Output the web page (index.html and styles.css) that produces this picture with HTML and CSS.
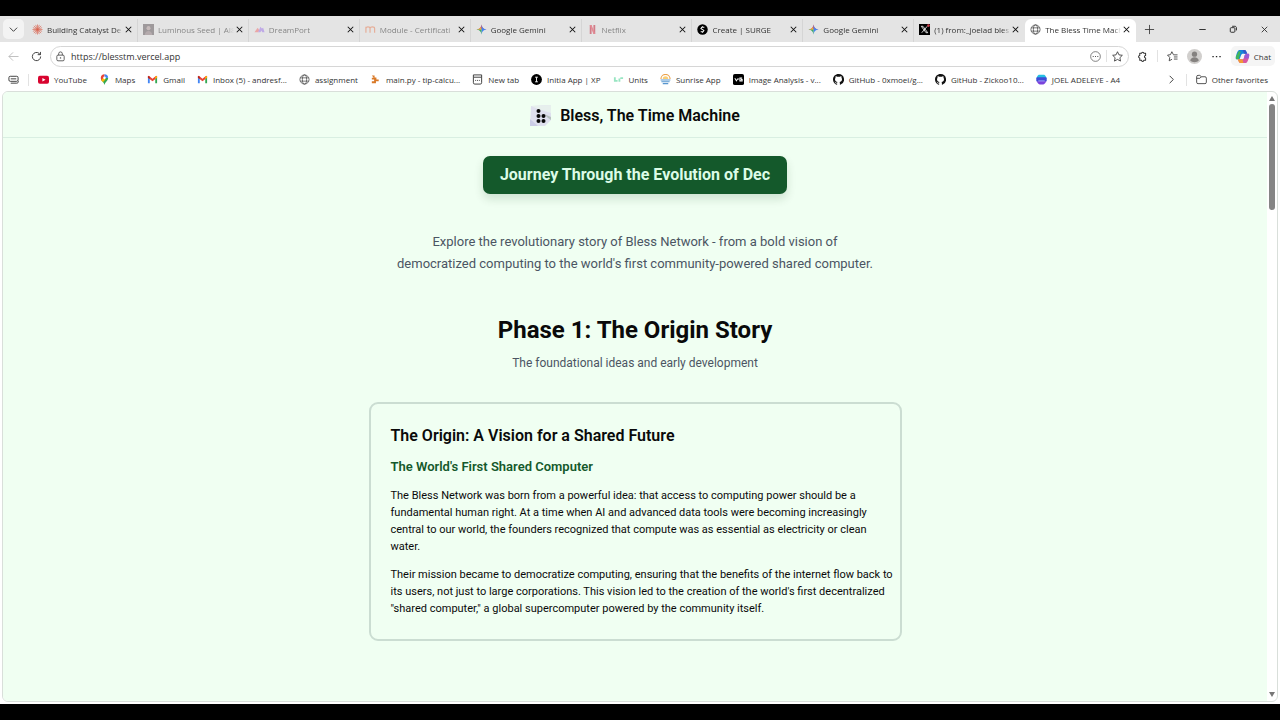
FILE: index.html
```html
<!DOCTYPE html>
<html lang="en">
  <head>
    <meta charset="UTF-8" />
    <meta name="viewport" content="width=device-width, initial-scale=1.0" />
    <title>Bless, The Time Machine</title>
    <link rel="stylesheet" href="styles.css">
  </head>
  <body>
    <svg class="sprite" aria-hidden="true">
      <symbol id="close" viewBox="0 0 12 12"><path d="M3 3l6 6M9 3L3 9" fill="none" stroke="currentColor" stroke-width="1.1"/></symbol>
      <symbol id="globe" viewBox="0 0 12 12"><g fill="none" stroke="#444" stroke-width=".8"><circle cx="6" cy="6" r="5"/><ellipse cx="6" cy="6" rx="2.3" ry="5"/><path d="M1.4 4.2h9.2M1.4 7.8h9.2"/></g></symbol>
      <symbol id="gemini" viewBox="0 0 12 12"><path d="M6 .5C6.5 4 8 5.500 11.500 6H.5C4 5.500 5.500 4 6 .5z" fill="#e8574b"/><path d="M6 .5C6.500 4 8 5.500 11.500 6 8 6.500 6.500 8 6 11.500z" fill="#4285f4"/><path d="M.5 6C4 5.500 5.500 6 6 6v5.500C5.500 8 4 6.500.5 6z" fill="#43a866"/><path d="M.5 6C3 5.700 4.500 5 5.200 3.800L6 6z" fill="#f2b632"/></symbol>
      <symbol id="gmail" viewBox="0 0 12 12"><path d="M1 10V3l2 1.500V10z" fill="#4285f4"/><path d="M9 10V4.500L11 3v7z" fill="#34a853"/><path d="M1 2.500L2 2l4 3.200L10 2l1 .5V4L6 7.800 1 4z" fill="#ea4335"/><path d="M1 2.500L3 2.800v2.700L1 4z" fill="#b3261e"/><path d="M11 2.500L9 2.800v2.700L11 4z" fill="#fbbc04"/></symbol>
      <symbol id="github" viewBox="0 0 16 16"><path fill="#111" d="M8 0C3.580 0 0 3.580 0 8c0 3.540 2.290 6.530 5.470 7.590.4.070.55-.17.55-.38v-1.490c-2.010.37-2.530-.49-2.690-.94-.09-.23-.48-.94-.82-1.130-.28-.15-.68-.52-.01-.53.63-.01 1.080.58 1.230.82.72 1.210 1.870.87 2.330.66.070-.52.28-.87.51-1.070-1.780-.2-3.640-.89-3.640-3.950 0-.87.31-1.590.82-2.150-.08-.2-.36-1.020.08-2.120 0 0 .67-.21 2.200.82a7.420 7.420 0 0 1 4 0c1.530-1.040 2.200-.82 2.200-.82.44 1.100.16 1.920.08 2.120.51.56.82 1.270.82 2.150 0 3.070-1.870 3.750-3.650 3.950.29.25.54.73.54 1.480v2.200c0 .21.15.46.55.38A8 8 0 0 0 8 0z"/></symbol>
      <symbol id="star" viewBox="0 0 12 12"><path d="M6 .8l1.600 3.400 3.700.5-2.700 2.600.7 3.700L6 9.200 2.700 11l.7-3.700L.7 4.700l3.700-.5z" fill="none" stroke="#333" stroke-width=".9" stroke-linejoin="round"/></symbol>
    </svg>

    <div class="browser">
      <div class="tab-strip">
        <button class="tab-menu" aria-label="Tab actions"><svg class="icon" viewBox="0 0 12 12"><path d="M2 4l4 4 4-4" fill="none" stroke="#333"/></svg></button>
        <div class="tabs">
          <div class="tab">
            <svg class="icon" viewBox="0 0 12 12"><path d="M6 .5v11M.5 6h11M2 2l8 8M10 2l-8 8M4 1l4 10M8 1L4 11M1 4l10 4M11 4L1 8" stroke="#d9614c" stroke-width=".7"/></svg>
            <button class="tab-title">Building Catalyst De</button>
            <button class="close" aria-label="Close tab"><svg class="icon"><use href="#close"/></svg></button>
          </div>
          <div class="tab asleep">
            <svg class="icon" viewBox="0 0 12 12"><path fill="#655c60" d="M0 0h12v12H0z"/><circle cx="6" cy="4.500" r="2.200" fill="#b19a9a"/><path d="M2 12c0-6 8-6 8 0" fill="#8e7b80"/></svg>
            <button class="tab-title">Luminous Seed | AI8</button>
            <button class="close" aria-label="Close tab"><svg class="icon"><use href="#close"/></svg></button>
          </div>
          <div class="tab asleep">
            <svg class="icon" viewBox="0 0 12 12"><path d="M.5 9L4 4l2 3-1.500 2z" fill="#ef7777"/><path d="M4.500 9L7 3l1.500 2L10 4l1.500 5H9L8 7 7 9z" fill="#a27be8"/></svg>
            <button class="tab-title">DreamPort</button>
            <button class="close" aria-label="Close tab"><svg class="icon"><use href="#close"/></svg></button>
          </div>
          <div class="tab asleep">
            <svg class="icon" viewBox="0 0 12 12"><path d="M1 9.500V3M1 5c0-2.500 4.500-2.500 4.500 0v4.500M5.500 5c0-2.500 5-2.500 5 0v4.500" fill="none" stroke="#e8835c" stroke-width="1.300"/></svg>
            <button class="tab-title">Module - Certificati</button>
            <button class="close" aria-label="Close tab"><svg class="icon"><use href="#close"/></svg></button>
          </div>
          <div class="tab">
            <svg class="icon"><use href="#gemini"/></svg>
            <button class="tab-title">Google Gemini</button>
            <button class="close" aria-label="Close tab"><svg class="icon"><use href="#close"/></svg></button>
          </div>
          <div class="tab asleep">
            <svg class="icon" viewBox="0 0 12 12"><path d="M3 1h2v10H3zM7 1h2v10H7z" fill="#c3283e"/><path d="M3 1h2l4 10H7z" fill="#e34455"/></svg>
            <button class="tab-title">Netflix</button>
            <button class="close" aria-label="Close tab"><svg class="icon"><use href="#close"/></svg></button>
          </div>
          <div class="tab">
            <svg class="icon" viewBox="0 0 12 12"><circle cx="6" cy="6" r="5.700"/><path d="M8 3.500H5.200L4.300 5l3.200 2-.9 1.500H4M6 2.500v1M6 8.500v1" fill="none" stroke="#fff" stroke-width="1.100"/></svg>
            <button class="tab-title">Create | SURGE</button>
            <button class="close" aria-label="Close tab"><svg class="icon"><use href="#close"/></svg></button>
          </div>
          <div class="tab">
            <svg class="icon"><use href="#gemini"/></svg>
            <button class="tab-title">Google Gemini</button>
            <button class="close" aria-label="Close tab"><svg class="icon"><use href="#close"/></svg></button>
          </div>
          <div class="tab">
            <svg class="icon" viewBox="0 0 12 12"><path d="M0 0h12v12H0z"/><path d="M2.500 2.500h1.800l5.200 7H7.700zM9 2.500l-6 7" fill="none" stroke="#fff" stroke-width=".9"/><circle cx="10.300" cy="1.700" r="1.500" fill="#c73b48"/></svg>
            <button class="tab-title">(1) from:_joelad bles</button>
            <button class="close" aria-label="Close tab"><svg class="icon"><use href="#close"/></svg></button>
          </div>
          <div class="tab active">
            <svg class="icon"><use href="#globe"/></svg>
            <button class="tab-title">The Bless Time Mach</button>
            <button class="close" aria-label="Close tab"><svg class="icon"><use href="#close"/></svg></button>
          </div>
        </div>
        <button class="new-tab" aria-label="New tab"><svg class="icon" viewBox="0 0 12 12"><path d="M6 1v10M1 6h10" stroke="#333" stroke-width=".9"/></svg></button>
        <div class="window-controls">
          <button aria-label="Minimize"><svg class="icon" viewBox="0 0 12 12"><path d="M2.500 6h7" stroke="#222"/></svg></button>
          <button aria-label="Restore"><svg class="icon" viewBox="0 0 12 12"><rect x="2.500" y="4" width="5" height="5" rx="1" fill="none" stroke="#222"/><path d="M4.500 2.500h3c1 0 1.700.7 1.700 1.700V7" fill="none" stroke="#222"/></svg></button>
          <button aria-label="Close window"><svg class="icon" viewBox="0 0 12 12"><path d="M3 3l6 6M9 3L3 9" stroke="#222" stroke-width=".9"/></svg></button>
        </div>
      </div>

      <div class="toolbar">
        <button aria-label="Back"><svg class="icon" viewBox="0 0 12 12"><path d="M11.500 6H1M5.500 1.500L1 6l4.500 4.500" fill="none" stroke="#bbb"/></svg></button>
        <button aria-label="Reload"><svg class="icon" viewBox="0 0 12 12"><path d="M10.500 6A4.500 4.500 0 1 1 9 2.700L10.200 4M10.300 1v3H7.300" fill="none" stroke="#333"/></svg></button>
        <div class="address">
          <svg class="icon" viewBox="0 0 12 12"><g fill="none" stroke="#444" stroke-width=".9"><rect x="2" y="4.500" width="8" height="6.200" rx="1.300"/><path d="M4 4.500V3a2 2 0 0 1 4 0v1.500"/></g><circle cx="6" cy="7.500" r=".8" fill="#444"/></svg>
          <input type="text" aria-label="Address" value="https://blesstm.vercel.app">
          <button aria-label="Page options"><svg class="icon" viewBox="0 0 12 12"><circle cx="6" cy="6" r="5.300" fill="none" stroke="#555" stroke-width=".8"/><path d="M3 6h1M5.500 6h1M8 6h1" stroke="#333"/></svg></button>
          <span class="divider"></span>
          <button aria-label="Add to favorites"><svg class="icon"><use href="#star"/></svg></button>
        </div>
        <div class="tools">
          <button aria-label="Extensions"><svg class="icon" viewBox="0 0 12 12"><path d="M3 2.500h2a1.200 1.200 0 0 1 2.400 0h2V5a1.200 1.200 0 0 0 0 2.600v2.600h-2a1.200 1.200 0 0 1-2.400 0H3V7.600A1.300 1.300 0 0 1 3 5z" fill="none" stroke="#333" stroke-width="1.100" stroke-linejoin="round"/></svg></button>
          <span class="divider"></span>
          <button aria-label="Favorites"><svg class="icon" viewBox="0 0 12 12"><path d="M7 4L5.300.8 3.800 4 .6 4.500 3 7l-.6 3.700L5.500 9M7 4.200h4.500M7.500 6.500h4M7.500 8.800h4" fill="none" stroke="#333" stroke-width=".9"/></svg></button>
          <button aria-label="Profile"><svg class="avatar" viewBox="0 0 16 16"><circle cx="8" cy="8" r="8" fill="#d1cfcd"/><circle cx="8" cy="5.500" r="2.800" fill="#858280"/><path d="M3.500 12.500c0-5 9-5 9 0-2 2-7 2-9 0z" fill="#858280"/></svg></button>
          <button aria-label="Settings and more"><svg class="icon" viewBox="0 0 12 12"><path d="M1.500 5.500H3v1.300H1.500zM5.300 5.500h1.500v1.300H5.300zM9.100 5.500h1.500v1.300H9.100z" fill="#222"/></svg></button>
          <button class="chat"><svg class="avatar" viewBox="0 0 16 16"><path d="M5 1h5c2 0 2 2 3 4H8C6 5 6 11 4 11H2C0 11 1 8 1.500 6S3 1 5 1z" fill="#1683dc"/><path d="M1 8l3-6 2 1-2 8H2C1 11 .8 9.500 1 8z" fill="#43b65a"/><path d="M11 15H6c-2 0-2-2-3-4h5c2 0 2-6 4-6h2c2 0 1 3 .5 5S13 15 11 15z" fill="#d957a0"/><path d="M6 15c-2 0-2-2-3-4h5l1 4z" fill="#f29a36"/><path d="M10 1c2 0 2 2 3 4h-3L8 1z" fill="#3457c8"/><path d="M10 7l2-2h2c2 0 1 3 .5 5H10z" fill="#9b59d5"/></svg>Chat</button>
        </div>
      </div>

      <nav class="bookmarks" aria-label="Favorites bar">
        <button aria-label="Saved passwords"><svg class="icon" viewBox="0 0 12 12"><rect x="1" y="2.500" width="10" height="5.500" rx="1.500" fill="none" stroke="#333"/><path d="M3 5.300h6M3 10h6.500c1 0 2-.8 2-2" fill="none" stroke="#333"/></svg></button>
        <span class="divider"></span>
        <div class="links">
          <a href="#"><svg class="icon" viewBox="0 0 12 12"><rect y="2" width="12" height="8.500" rx="2" fill="#d8042f"/><path d="M4.800 4.300v4l3.400-2z" fill="#fff"/></svg>YouTube</a>
          <a href="#"><svg class="icon" viewBox="0 0 12 12"><path d="M6 12C5 8.500 2 7.500 2 4.200h8C10 7.500 7 8.500 6 12z" fill="#34a853"/><path d="M2 4.200A4 4 0 0 1 6 .3v4L3 7.500C2.300 6.500 2 5.500 2 4.200z" fill="#ea4335"/><path d="M2.500 6.500L5 4l2 2-2.800 3z" fill="#fbbc04"/><path d="M6 .3a4 4 0 0 1 4 3.900L6 4.500z" fill="#4285f4"/><circle cx="6" cy="4.200" r="1.400" fill="#fff"/></svg>Maps</a>
          <a href="#"><svg class="icon"><use href="#gmail"/></svg>Gmail</a>
          <a href="#"><svg class="icon"><use href="#gmail"/></svg>Inbox (5) - andresf...</a>
          <a href="#"><svg class="icon"><use href="#globe"/></svg>assignment</a>
          <a href="#"><svg class="icon" viewBox="0 0 12 12"><path d="M2 1.500h3v2.200h2v2.200h2.500v2H6.500v2.300H2V8h2.500V6H2V4h2z" fill="#d97927"/></svg>main.py - tip-calcu...</a>
          <a href="#"><svg class="icon" viewBox="0 0 12 12"><path d="M1.500 3.500v6c0 1 .5 1.500 1.500 1.500h6c1 0 1.500-.5 1.500-1.500V3.500zM1.500 3.500V1h9v2.500M3.500 7h1M5.500 7h1M7.500 7h1" fill="none" stroke="#333"/></svg>New tab</a>
          <a href="#"><svg class="icon" viewBox="0 0 12 12"><circle cx="6" cy="6" r="5.900"/><path d="M4.500 3.500h3M4.500 8.500h3M6 3.500v5" stroke="#fff"/></svg>Initia App | XP</a>
          <a href="#"><svg class="icon" viewBox="0 0 12 12"><path d="M1 3.500h2v3h2v2H1zM6 5h2v3.500H6zM8 3.500h3v2H8z" fill="#98e5c2"/></svg>Units</a>
          <a href="#"><svg class="icon" viewBox="0 0 12 12"><path d="M1 5.500a5 5 0 0 1 10 0" fill="none" stroke="#eda34c" stroke-width="1.300"/><path d="M3 5.500a3 3 0 0 1 6 0z" fill="#f9ce75"/><path d="M.7 6.500h10.600M1.500 8.500h9M3 10.500h6" stroke="#5796cf" stroke-width="1.200"/></svg>Sunrise App</a>
          <a href="#"><svg class="icon" viewBox="0 0 12 12"><rect width="12" height="12" rx="2"/><path d="M2 4.500l1.700 3 1.300-2h1.500M10 4.500H7.500v3H10V6H8.500" fill="none" stroke="#fff" stroke-width="1.100"/></svg>Image Analysis - v...</a>
          <a href="#"><svg class="icon"><use href="#github"/></svg>GitHub - 0xmoei/g...</a>
          <a href="#"><svg class="icon"><use href="#github"/></svg>GitHub - Zickoo10...</a>
          <a href="#"><svg class="icon" viewBox="0 0 12 12"><path d="M3 .8h6c1.500 1 2.300 2.500 2.500 4H.5C.7 3.300 1.500 1.800 3 .8z" fill="#25bfe3"/><rect x=".3" y="3.500" width="11.400" height="5" rx="1.500" fill="#3f4bd5"/><path d="M1 8h10c-.5 2-1.500 3-3 3.500H4C2.500 11 1.500 10 1 8z" fill="#7b43dc"/><path d="M2.500 7.500h7" stroke="#a6a4ff"/></svg>JOEL ADELEYE - A4</a>
        </div>
        <button class="more" aria-label="More favorites"><svg class="icon" viewBox="0 0 12 12"><path d="M4 2l4 4-4 4" fill="none" stroke="#333"/></svg></button>
        <span class="divider"></span>
        <a class="other" href="#"><svg class="icon" viewBox="0 0 12 12"><path d="M.7 3c0-1 .5-1.500 1.500-1.500h2L5.800 3h4c1 0 1.500.5 1.500 1.500V9c0 1-.5 1.500-1.500 1.500H2.200C1.200 10.500.7 10 .7 9zM.7 4.700h3.500L5.800 3" fill="none" stroke="#333" stroke-width=".9"/></svg>Other favorites</a>
      </nav>

      <div class="viewport">
        <div class="page">
          <header class="site-header">
            <svg class="logo" viewBox="0 0 22 22" aria-hidden="true"><path d="M1 1l20-1v15l-6 6H0z" fill="#dfe0ee"/><path d="M1 1l20-1v8L8 4z" fill="#e7f0ed"/><path d="M14 9l7 3v3l-3-2z" fill="#b7c1bf"/><path d="M0 14l8 7H0z" fill="#cbcce6"/><g fill="#080808"><circle cx="8.500" cy="6" r="2"/><circle cx="8.500" cy="11" r="2"/><circle cx="13.500" cy="11" r="2"/><circle cx="8.500" cy="16" r="2"/><circle cx="13.500" cy="16" r="2"/></g></svg>
            <span>Bless, The Time Machine</span>
          </header>
          <main>
            <h1 class="banner">Journey Through the Evolution of Dec</h1>
            <p class="intro">Explore the revolutionary story of Bless Network - from a bold vision of democratized computing to the world's first community-powered shared computer.</p>
            <section class="phase">
              <h2>Phase 1: The Origin Story</h2>
              <p class="subtitle">The foundational ideas and early development</p>
              <article class="card">
                <h3>The Origin: A Vision for a Shared Future</h3>
                <h4>The World's First Shared Computer</h4>
                <p>The Bless Network was born from a powerful idea: that access to computing power should be a fundamental human right. At a time when AI and advanced data tools were becoming increasingly central to our world, the founders recognized that compute was as essential as electricity or clean water.</p>
                <p>Their mission became to democratize computing, ensuring that the benefits of the internet flow back to its users, not just to large corporations. This vision led to the creation of the world's first decentralized "shared computer," a global supercomputer powered by the community itself.</p>
              </article>
            </section>
          </main>
        </div>
        <div class="scrollbar" aria-hidden="true">
          <svg viewBox="0 0 6 5"><path d="M3 0l3 5H0z" fill="#777"/></svg>
          <div class="track"><div class="thumb"></div></div>
          <svg viewBox="0 0 6 5"><path d="M3 5l3-5H0z" fill="#777"/></svg>
        </div>
      </div>
    </div>
  </body>
</html>
```

FILE: styles.css
```css
* {
  box-sizing: border-box;
}
body {
  margin: 0;
  padding: 16px 0;
  min-height: 100vh;
  display: flex;
  background-color: #000;
  font-family: Roboto, sans-serif;
}
button,
input {
  font: inherit;
  color: inherit;
  background: none;
  border: none;
  padding: 0;
}
button {
  display: flex;
  align-items: center;
  justify-content: center;
  cursor: pointer;
}
a {
  color: inherit;
  text-decoration: none;
}
.sprite {
  position: absolute;
  width: 0;
  height: 0;
}
.icon {
  width: 11px;
  height: 11px;
  flex: none;
}
.divider {
  width: 1px;
  height: 12px;
  background-color: #e2e2e2;
}

/* browser window */
.browser {
  flex: 1;
  min-width: 0;
  display: flex;
  flex-direction: column;
  background-color: #fff;
  color: #333;
  font-family: "Open Sans", sans-serif;
  font-size: 8px;
}
.tab-strip {
  display: flex;
  align-items: center;
  height: 26px;
  padding-left: 3px;
  background-color: #e4e4e4;
}
.tab-menu {
  width: 21px;
  height: 20px;
  margin-right: 3px;
  border-radius: 5px;
  background-color: #f3f3f3;
}
.tabs {
  flex: 1;
  min-width: 0;
  display: flex;
  align-self: stretch;
}
.tab {
  flex: 1;
  min-width: 0;
  display: flex;
  align-items: center;
  margin: 3px 0 0;
  padding: 0 4px 3px 5px;
}
.tab > .icon {
  margin-right: 4px;
}
.tab + .tab {
  box-shadow: -1px 0 #d5d5d5;
}
.tab.active {
  background-color: #fff;
  border-radius: 6px 6px 0 0;
  box-shadow: none;
}
.tab.asleep .tab-title,
.tab.asleep > .icon {
  opacity: 0.55;
}
.tab-title {
  flex: 1;
  min-width: 0;
  justify-content: flex-start;
  white-space: nowrap;
  mask-image: linear-gradient(to right, #000 90%, transparent);
}
.close {
  color: #111;
}
.new-tab {
  width: 26px;
}
.window-controls {
  display: flex;
  margin-left: 25px;
}
.window-controls button {
  width: 31px;
}
.toolbar {
  display: flex;
  align-items: center;
  gap: 12px;
  height: 28px;
  padding: 0 5px 0 8px;
}
.address {
  flex: 1;
  display: flex;
  align-items: center;
  gap: 5px;
  height: 21px;
  padding: 0 5px 0 4px;
  border: 1px solid #d6d6d6;
  border-radius: 11px;
  font-size: 9px;
}
.toolbar > button + .address {
  margin-left: -4px;
}
.address input {
  flex: 1;
  min-width: 0;
}
.tools {
  display: flex;
  align-items: center;
  gap: 9px;
  margin-left: -4px;
}
.avatar {
  width: 15px;
  height: 15px;
}
.chat {
  gap: 4px;
  height: 20px;
  padding: 0 4px;
  border-radius: 5px;
  background-color: #f5f5f5;
}
.bookmarks {
  display: flex;
  align-items: center;
  height: 21px;
  padding: 0 12px 2px 8px;
  gap: 9px;
}
.links {
  flex: 1;
  min-width: 0;
  display: flex;
  gap: 12px;
  overflow: hidden;
}
.bookmarks a {
  display: flex;
  align-items: center;
  gap: 5px;
  white-space: nowrap;
}

/* page */
.viewport {
  flex: 1;
  display: flex;
  margin: 0 2px 2px;
  border: 1px solid #d9dfda;
  border-radius: 6px;
  background-color: #fff;
  overflow: hidden;
}
.page {
  flex: 1;
  min-width: 0;
  background-color: #f0fff2;
  color: #0a0a0a;
  font-family: Roboto, sans-serif;
}
.site-header {
  display: flex;
  align-items: center;
  justify-content: center;
  gap: 8px;
  height: 46px;
  padding-top: 2px;
  border-bottom: 1px solid #d9efe2;
  font-size: 16px;
  font-weight: 600;
}
.logo {
  width: 22px;
  height: 22px;
}
main {
  display: flex;
  flex-direction: column;
  align-items: center;
  padding: 18px 20px 40px;
}
h1,
h2,
h3,
h4,
p {
  margin: 0;
}
.banner {
  padding: 7px 17px;
  border-radius: 7px;
  background-color: #14592b;
  box-shadow: 0 5px 10px rgba(0, 60, 20, 0.14);
  color: #dcfce7;
  font-size: 16px;
  line-height: 24px;
}
.intro {
  max-width: 482px;
  margin-top: 37px;
  color: #4b5563;
  font-size: 13px;
  line-height: 22px;
  text-align: center;
}
.phase {
  width: 100%;
  max-width: 533px;
  margin-top: 40px;
  text-align: center;
}
h2 {
  font-size: 24px;
  line-height: 30px;
}
.subtitle {
  margin-top: 8px;
  color: #4b5563;
  font-size: 12px;
  line-height: 20px;
}
.card {
  margin-top: 29px;
  padding: 20px 4px 22px 20px;
  border: 2px solid #cbddd2;
  border-radius: 9px;
  text-align: left;
}
h3 {
  font-size: 16px;
  font-weight: 600;
  line-height: 24px;
}
h4 {
  margin-top: 10px;
  color: #14592b;
  font-size: 13px;
  font-weight: 600;
  line-height: 18px;
}
.card p {
  margin-top: 11px;
  font-size: 11px;
  line-height: 17px;
}
.scrollbar {
  display: flex;
  flex-direction: column;
  align-items: center;
  width: 10px;
  padding: 4px 0;
}
.scrollbar svg {
  width: 6px;
  height: 5px;
}
.track {
  flex: 1;
  padding-top: 3px;
}
.thumb {
  width: 6px;
  height: 18%;
  border-radius: 3px;
  background-color: #858585;
}
```
